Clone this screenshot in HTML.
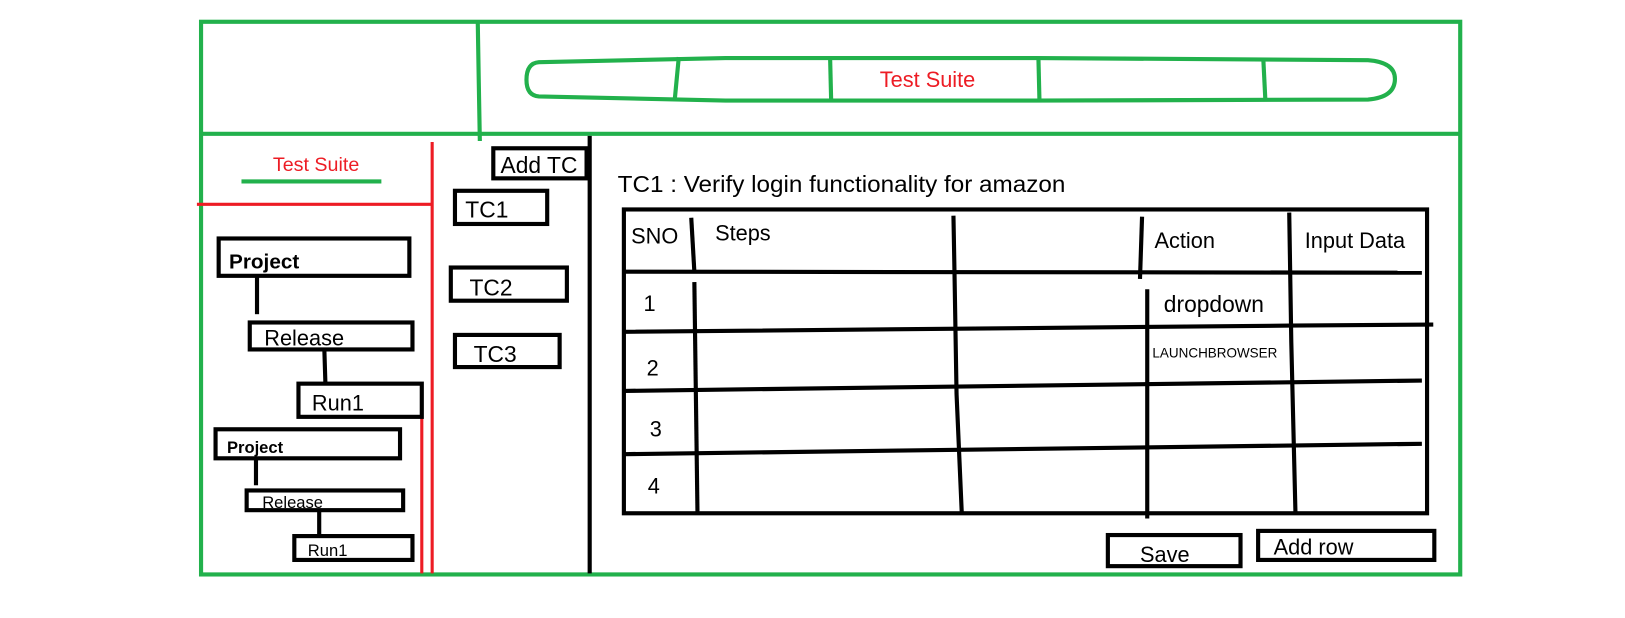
<!DOCTYPE html>
<html><head><style>
html,body{margin:0;padding:0;background:#fff;width:1625px;height:618px;overflow:hidden}
svg{display:block}
text{font-family:"Liberation Sans",sans-serif;fill:#000}
</style></head><body>
<svg width="1625" height="618" viewBox="0 0 1568 596" preserveAspectRatio="none" xmlns="http://www.w3.org/2000/svg">
<g fill="none" stroke="#22b14c" stroke-width="4">
<rect x="194" y="21" width="1215" height="533"/>
<line x1="194" y1="129" x2="1409" y2="129"/>
<path d="M461 21 L462 80 L463 136"/>
<path d="M520 60 L700 56 L1000 56 L1320 58 Q1346 60 1346 76 Q1346 94 1320 96 L1000 97 L700 97 L520 93 Q508 92 508 77 Q508 61 520 60Z"/>
<line x1="655" y1="55" x2="651" y2="97"/>
<line x1="801" y1="56" x2="802" y2="97"/>
<line x1="1002" y1="56" x2="1003" y2="97"/>
<line x1="1219" y1="57" x2="1221" y2="97"/>
<line x1="233" y1="175" x2="368" y2="175"/>
</g>
<text x="895" y="84" font-size="21" text-anchor="middle" style="fill:#ed1c24">Test Suite</text>
<text x="305" y="165" font-size="19" text-anchor="middle" style="fill:#ed1c24">Test Suite</text>
<g stroke="#ed1c24" stroke-width="3" fill="none">
<line x1="190" y1="197" x2="417" y2="197"/>
<line x1="417" y1="137" x2="417" y2="553"/>
<line x1="407" y1="400" x2="407" y2="553"/>
</g>
<g stroke="#000" stroke-width="4" fill="none">
<line x1="569" y1="131" x2="569" y2="553"/>
<rect x="476" y="143" width="90" height="29"/>
<rect x="439" y="184" width="89" height="32"/>
<rect x="435" y="258" width="112" height="32"/>
<rect x="439" y="323" width="101" height="31"/>
<rect x="211" y="230" width="184" height="36"/>
<line x1="248" y1="267" x2="248" y2="303"/>
<rect x="241" y="311" width="157" height="26"/>
<line x1="313" y1="338" x2="314" y2="370"/>
<rect x="288" y="370" width="119" height="32"/>
<rect x="208" y="414" width="178" height="28"/>
<line x1="247" y1="442" x2="247" y2="468"/>
<rect x="238" y="473" width="151" height="19"/>
<line x1="308" y1="492" x2="308" y2="515"/>
<rect x="284" y="517" width="114" height="23"/>
<rect x="602" y="202" width="775" height="293"/>
<path d="M602 262 L1372 263"/>
<path d="M602 320 L1245 314 L1383 313"/>
<path d="M602 377 L1372 367"/>
<path d="M602 438 L1372 428"/>
<path d="M667 210 L670 262"/>
<path d="M670 272 L673 494"/>
<path d="M920 208 L921 262 L923 380 L928 494"/>
<path d="M1102 209 L1100 269"/>
<path d="M1107 279 L1107 500"/>
<path d="M1244 205 L1246 330 L1250 494"/>
<rect x="1069" y="516" width="128" height="30"/>
<rect x="1214" y="512" width="170" height="28"/>
</g>
<text x="483" y="167" font-size="22">Add TC</text>
<text x="449" y="210" font-size="22">TC1</text>
<text x="453" y="285" font-size="22">TC2</text>
<text x="457" y="349" font-size="22">TC3</text>
<text x="221" y="259" font-size="20" font-weight="bold">Project</text>
<text x="255" y="333" font-size="21">Release</text>
<text x="301" y="396" font-size="21">Run1</text>
<text x="219" y="437" font-size="16" font-weight="bold">Project</text>
<text x="253" y="490" font-size="16">Release</text>
<text x="297" y="536" font-size="16">Run1</text>
<text x="596" y="185" font-size="22" textLength="432" lengthAdjust="spacingAndGlyphs">TC1 : Verify login functionality for amazon</text>
<text x="609" y="235" font-size="21">SNO</text>
<text x="690" y="232" font-size="21">Steps</text>
<text x="1114" y="239" font-size="21">Action</text>
<text x="1259" y="239" font-size="21">Input Data</text>
<text x="1123" y="301" font-size="22">dropdown</text>
<text x="1112" y="345" font-size="13">LAUNCHBROWSER</text>
<text x="621" y="300" font-size="21">1</text>
<text x="624" y="362" font-size="21">2</text>
<text x="627" y="421" font-size="21">3</text>
<text x="625" y="476" font-size="21">4</text>
<text x="1100" y="542" font-size="21">Save</text>
<text x="1229" y="535" font-size="21">Add row</text>
</svg>
</body></html>
